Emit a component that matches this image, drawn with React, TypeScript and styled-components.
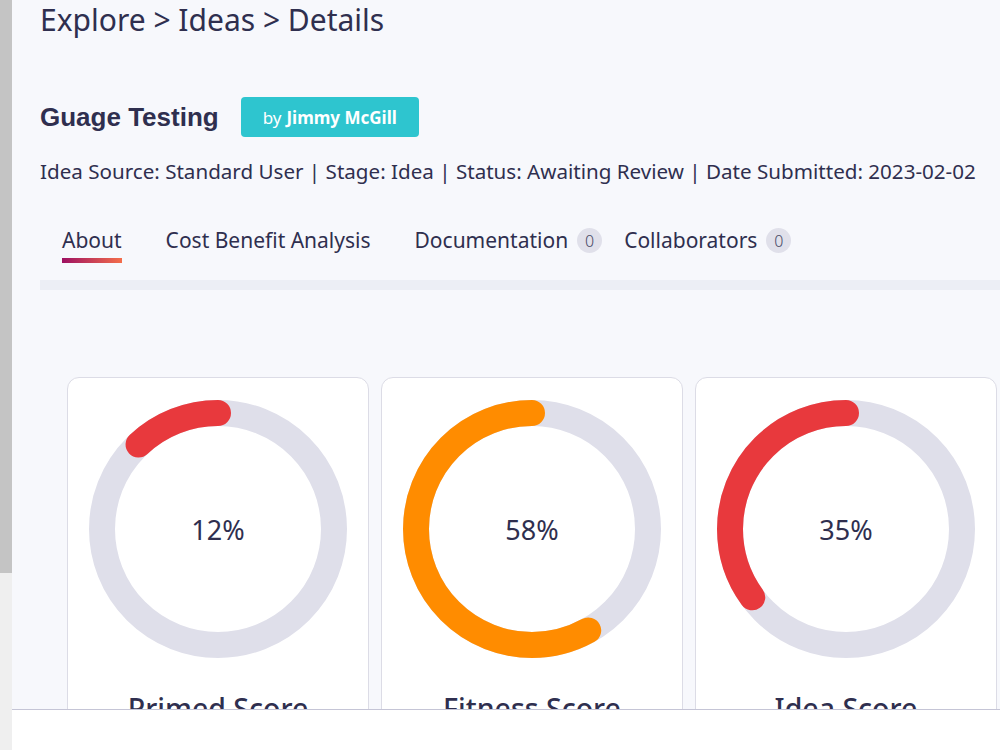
import React from "react"
import styled, { createGlobalStyle } from "styled-components"

const GlobalStyle = createGlobalStyle`
  html, body {
    margin: 0;
    padding: 0;
    background: #f7f8fc;
    font-family: "Noto Sans", "Open Sans", sans-serif;
    color: #2f2f4f;
  }
`

const tabs = [
  { label: 'About', count: null, active: true },
  { label: 'Cost Benefit Analysis', count: null, active: false },
  { label: 'Documentation', count: 0, active: false },
  { label: 'Collaborators', count: 0, active: false },
]

const scores = [
  { name: 'Primed Score', value: 12, color: '#e8393d' },
  { name: 'Fitness Score', value: 58, color: '#ff8c00' },
  { name: 'Idea Score', value: 35, color: '#e8393d' },
]

const RADIUS = 116
const STROKE = 26
const CIRC = 2 * Math.PI * RADIUS

const Gauge: React.FC<{ value: number; color: string }> = ({ value, color }) => {
  const size = RADIUS * 2 + STROKE
  return <GaugeWrap>
    <svg width={size} height={size} viewBox={`${-size / 2} ${-size / 2} ${size} ${size}`}>
      <circle r={RADIUS} fill="none" stroke="#dfdfea" strokeWidth={STROKE} />
      <circle
        r={RADIUS}
        fill="none"
        stroke={color}
        strokeWidth={STROKE}
        strokeLinecap="round"
        strokeDasharray={`${(CIRC * value) / 100} ${CIRC}`}
        transform="scale(-1,1) rotate(-90)"
      />
    </svg>
    <GaugeValue>{value}%</GaugeValue>
  </GaugeWrap>
}

const App: React.FC<{}> = () => {
  return <Page>
    <GlobalStyle />
    <Scrollbar>
      <Thumb />
    </Scrollbar>
    <Main>
      <Breadcrumb>Explore &gt; Ideas &gt; Details</Breadcrumb>
      <TitleRow>
        <Title>Guage Testing</Title>
        <Author>by <b>Jimmy McGill</b></Author>
      </TitleRow>
      <Meta>Idea Source: Standard User | Stage: Idea | Status: Awaiting Review | Date Submitted: 2023-02-02</Meta>
      <Tabs>
        {tabs.map(tab => <Tab key={tab.label} $hasCount={tab.count !== null}>
          <TabLabel $active={tab.active}>{tab.label}</TabLabel>
          {tab.count !== null && <Count>{tab.count}</Count>}
        </Tab>)}
      </Tabs>
      <Divider />
      <Cards>
        {scores.map(score => <Card key={score.name}>
          <Gauge value={score.value} color={score.color} />
          <CardLabel>{score.name}</CardLabel>
        </Card>)}
      </Cards>
    </Main>
    <Footer />
  </Page>
}

const Page = styled.div`
  display: flex;
  height: 750px;
  overflow: hidden;
`

const Scrollbar = styled.div`
  width: 12px;
  flex-shrink: 0;
  background: #efefef;
`

const Thumb = styled.div`
  height: 573px;
  background: #c4c4c4;
`

const Main = styled.main`
  flex: 1;
  min-width: 0;
  padding-left: 28px;
  background: #f7f8fc;
`

const Breadcrumb = styled.h1`
  margin: 0;
  font-size: 30px;
  font-weight: 400;
  line-height: 40px;
`

const TitleRow = styled.div`
  display: flex;
  align-items: center;
  gap: 22px;
  margin-top: 57px;
`

const Title = styled.h2`
  margin: 0;
  font: bold 26px "Liberation Sans", Arial, sans-serif;
`

const Author = styled.span`
  display: inline-flex;
  align-items: center;
  height: 40px;
  padding: 0 22px;
  border-radius: 4px;
  background: #2ec5cf;
  color: #fff;
  font-size: 17px;
  b {
    margin-left: 5px;
    font-weight: 700;
  }
`

const Meta = styled.p`
  margin: 19px 0 0;
  font-size: 20.6px;
  line-height: 30px;
  white-space: nowrap;
`

const Tabs = styled.nav`
  display: flex;
  margin-top: 39px;
  padding-left: 22px;
`

const Tab = styled.div<{ $hasCount: boolean }>`
  display: flex;
  align-items: flex-start;
  gap: 9px;
  margin-right: ${p => (p.$hasCount ? 22 : 44)}px;
  font-size: 21px;
`

const TabLabel = styled.span<{ $active: boolean }>`
  display: block;
  height: 30px;
  padding-bottom: 3px;
  line-height: 30px;
  border-bottom: 5px solid transparent;
  border-image: ${p => (p.$active ? 'linear-gradient(90deg, #9c0f62, #f56f4a) 1' : 'none')};
`

const Count = styled.span`
  display: inline-flex;
  align-items: center;
  justify-content: center;
  width: 25px;
  height: 25px;
  margin-top: 3px;
  border-radius: 50%;
  background: #e0e0ea;
  color: #4a4a66;
  font-size: 16px;
  font-weight: 300;
`

const Divider = styled.div`
  height: 10px;
  margin-top: 17px;
  background: #eceef5;
`

const Cards = styled.section`
  display: flex;
  gap: 12px;
  margin-top: 87px;
  padding-left: 27px;
`

const Card = styled.article`
  flex: 0 0 302px;
  box-sizing: border-box;
  height: 420px;
  padding-top: 22px;
  border: 1px solid #dcdce6;
  border-radius: 12px;
  background: #fff;
  display: flex;
  flex-direction: column;
  align-items: center;
`

const GaugeWrap = styled.div`
  position: relative;
  width: 258px;
  height: 258px;
  svg {
    display: block;
  }
`

const GaugeValue = styled.div`
  position: absolute;
  inset: 0;
  display: flex;
  align-items: center;
  justify-content: center;
  font-size: 27px;
`

const CardLabel = styled.h3`
  margin: 31px 0 0;
  font-size: 28.5px;
  font-weight: 500;
`

const Footer = styled.footer`
  position: fixed;
  left: 12px;
  right: 0;
  bottom: 0;
  height: 40px;
  background: #fff;
  border-top: 1px solid #c5c5d6;
`

export default App
